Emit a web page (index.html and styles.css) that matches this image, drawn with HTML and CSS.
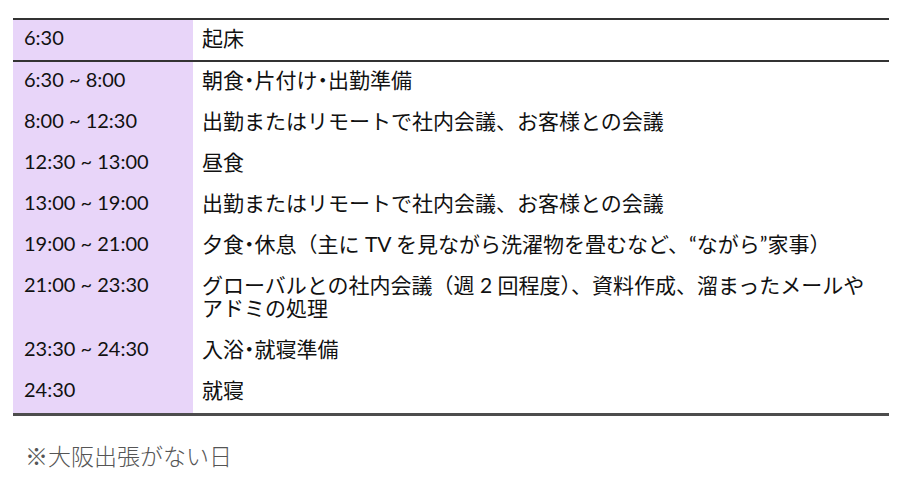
FILE: index.html
```html
<!DOCTYPE html>
<html lang="ja">
<head>
<meta charset="utf-8">
<link rel="stylesheet" href="styles.css">
</head>
<body>
<div class="page">
  <table class="schedule">
    <tr class="head">
      <td class="time">6:30</td>
      <td class="task">起床</td>
    </tr>
    <tr>
      <td class="time">6:30 ~ 8:00</td>
      <td class="task">朝食<span class="dot">・</span>片付け<span class="dot">・</span>出勤準備</td>
    </tr>
    <tr>
      <td class="time">8:00 ~ 12:30</td>
      <td class="task">出勤またはリモートで社内会議、お客様との会議</td>
    </tr>
    <tr>
      <td class="time">12:30 ~ 13:00</td>
      <td class="task">昼食</td>
    </tr>
    <tr>
      <td class="time">13:00 ~ 19:00</td>
      <td class="task">出勤またはリモートで社内会議、お客様との会議</td>
    </tr>
    <tr>
      <td class="time">19:00 ~ 21:00</td>
      <td class="task">夕食<span class="dot">・</span>休息（主に TV を見ながら洗濯物を畳むなど、“ながら”家事）</td>
    </tr>
    <tr>
      <td class="time">21:00 ~ 23:30</td>
      <td class="task">グローバルとの社内会議（週 2 回程度）、資料作成、溜まったメールや<br>アドミの処理</td>
    </tr>
    <tr>
      <td class="time">23:30 ~ 24:30</td>
      <td class="task">入浴<span class="dot">・</span>就寝準備</td>
    </tr>
    <tr class="last">
      <td class="time">24:30</td>
      <td class="task">就寝</td>
    </tr>
  </table>
  <p class="note">※大阪出張がない日</p>
</div>
</body>
</html>
```

FILE: styles.css
```css
html, body {
  margin: 0;
  padding: 0;
  background: #ffffff;
}
body {
  font-family: "Lato", "Noto Sans CJK JP", sans-serif;
  color: #111111;
}
.page {
  padding: 18px 23px 0 13px;
}
.schedule {
  width: 876px;
  border-collapse: collapse;
  border-top: 2px solid #333333;
  border-bottom: 3px solid #4d4d4d;
}
.schedule td {
  line-height: 23px;
  height: 23px;
  padding: 6px 8px 12px 11px;
  vertical-align: top;
}
.schedule .time {
  width: 161px;
  font-size: 20px;
  background: #e8d5f9;
}
.schedule .task {
  font-size: 21px;
  padding-left: 9px;
}
.dot {
  font-family: "Noto Sans CJK JP", sans-serif;
  font-feature-settings: "halt" 1;
}
.schedule .head td {
  border-bottom: 2px solid #333333;
  padding-bottom: 11px;
}
.note {
  margin: 22px 0 0 12px;
  font-family: "Noto Sans CJK JP", sans-serif;
  font-weight: 300;
  font-size: 23px;
  color: #555555;
}
```
